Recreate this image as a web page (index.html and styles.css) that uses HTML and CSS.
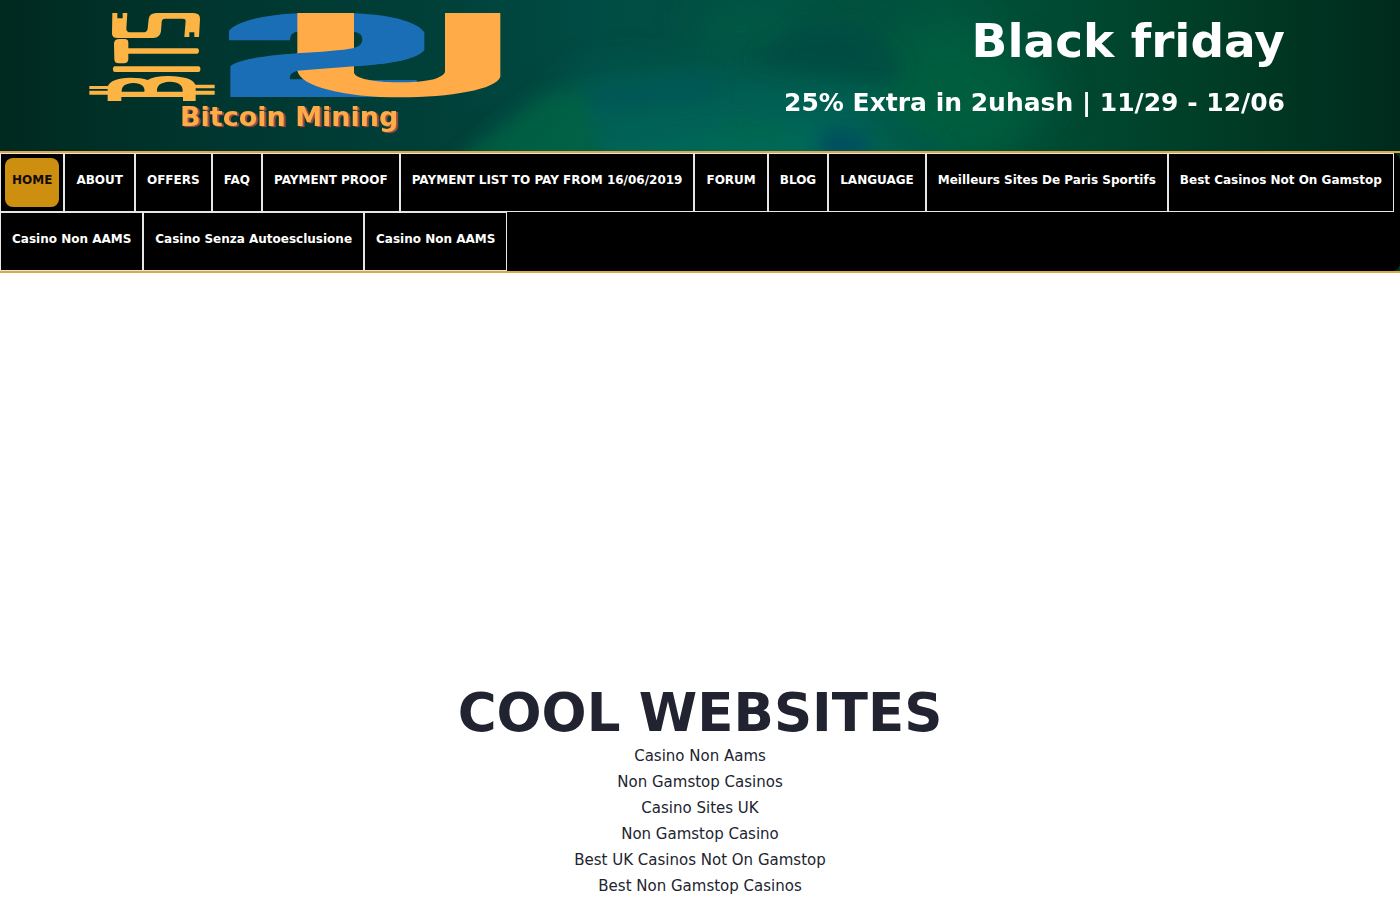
FILE: index.html
```html
<!DOCTYPE html>
<html lang="en">
<head>
<meta charset="utf-8">
<meta name="viewport" content="width=device-width, initial-scale=1">
<title>Bits2U Bitcoin Mining</title>
<link rel="stylesheet" href="styles.css">
</head>
<body>
<header class="banner">
  <svg class="aurora" viewBox="0 0 1400 151" preserveAspectRatio="none" aria-hidden="true">
    <defs>
      <filter id="soft" x="-50%" y="-50%" width="200%" height="200%"><feGaussianBlur stdDeviation="20"/></filter>
      <filter id="fine" x="-50%" y="-50%" width="200%" height="200%"><feGaussianBlur stdDeviation="9"/></filter>
    </defs>
    <g filter="url(#soft)">
      <path d="M480 170L600 75L860 80L960 170Z" fill="#00655a" opacity=".8"/>
      <path d="M860 50L960 20L1060 90L1000 160H900Z" fill="#00633f" opacity=".7"/>
      <path d="M700 10H780L830 40L700 50Z" fill="#006044" opacity=".6"/>
    </g>
    <g filter="url(#fine)">
      <path d="M450 165L545 95L582 88L600 165Z" fill="#006340" opacity=".75"/>
      <path d="M590 88L710 75L720 98L600 112Z" fill="#005258" opacity=".6"/>
      <path d="M800 25H865L905 65L890 85L750 62Z" fill="#004842" opacity=".7"/>
      <path d="M605 145L820 128L870 160H600Z" fill="#00705c" opacity=".6"/>
      <ellipse cx="842" cy="145" rx="28" ry="15" fill="#00505e"/>
      <path d="M880 110L955 155H920L870 120Z" fill="#00524a" opacity=".7"/>
      <ellipse cx="755" cy="131" rx="42" ry="10" fill="#006747" opacity=".6"/>
    </g>
  </svg>
  <a class="logo" href="#" aria-label="Bits2U Bitcoin Mining">
    <svg class="logo-art" width="412" height="122" viewBox="89 12 412 122">
      <g transform="translate(80 0) scale(.33333)" fill="#fcb544">
        <path d="M97 39H112V55H128V39H142L139 86Q139 97 152 97H188Q202 97 203 86L206 57Q208 39 230 39H340Q361 39 360 58L357 111H343V97H328V111H313L317 63Q317 56 308 56H255Q246 56 245 66L243 94Q240 114 220 114H112Q95 114 96 99Z"/>
        <path d="M118 117H134Q145 117 145 128V145H352Q357 146 357 153T352 161H145V178Q144 190 132 190H116Q103 190 103 178L102 130Q103 117 118 117Z"/>
        <rect x="99" y="199" width="262" height="17" rx="6"/>
        <path fill-rule="evenodd" d="M28 258H84Q92 235 150 233Q185 233 203 240Q222 228 265 228Q336 229 346 254H404V265H347V272H404V284H347V303H309V291H124V303H83V284H28V272H83V267H28ZM125 275H193Q197 251 160 249Q124 250 125 275ZM231 275H308Q310 246 269 245Q228 247 231 275Z"/>
      </g>
      <g transform="translate(220 0) scale(.33333)">
        <path fill="#1a6eb5" d="M27 121V93C50 62 145 43 240 40H402C500 43 590 63 613 97V150C590 180 500 193 402 199L232 212C215 217 208 225 210 238H590V291H31V199C60 176 150 166 232 160L402 144C418 141 427 132 427 118C427 105 419 98 402 95H232C216 97 211 105 210 121Z"/>
        <path fill="#004039" d="M402 199C500 193 590 180 613 150V215L600 240H402Z"/>
        <path fill="#1a6eb5" d="M402 144V199C500 193 590 180 613 150L560 130H425Q418 141 402 144Z"/>
        <path fill="#ffab48" d="M232 39H402V218C408 239 480 247 540 247C610 247 665 239 675 216V39H841V230C830 268 690 292 540 292C370 292 240 258 232 212Z"/>
        <path fill="#1a6eb5" d="M230 160C300 156 370 151 403 144V199L230 212Z"/>
      </g>
      <text class="logo-text" x="180" y="126">Bitcoin Mining</text>
    </svg>
  </a>
  <div class="promo">
    <h1 class="promo-title">Black friday</h1>
    <p class="promo-text">25% Extra in 2uhash | 11/29 - 12/06</p>
  </div>
</header>
<nav class="nav" aria-label="Main">
  <ul class="menu">
    <li class="item"><a class="link active" href="#">HOME</a></li>
    <li class="item"><a class="link" href="#">ABOUT</a></li>
    <li class="item"><a class="link" href="#">OFFERS</a></li>
    <li class="item"><a class="link" href="#">FAQ</a></li>
    <li class="item"><a class="link" href="#">PAYMENT PROOF</a></li>
    <li class="item"><a class="link" href="#">PAYMENT LIST TO PAY FROM 16/06/2019</a></li>
    <li class="item"><a class="link" href="#">FORUM</a></li>
    <li class="item"><a class="link" href="#">BLOG</a></li>
    <li class="item"><a class="link" href="#">LANGUAGE</a></li>
    <li class="item"><a class="link" href="#">Meilleurs Sites De Paris Sportifs</a></li>
    <li class="item"><a class="link" href="#">Best Casinos Not On Gamstop</a></li>
    <li class="item"><a class="link" href="#">Casino Non AAMS</a></li>
    <li class="item"><a class="link" href="#">Casino Senza Autoesclusione</a></li>
    <li class="item"><a class="link" href="#">Casino Non AAMS</a></li>
  </ul>
</nav>
<main class="content">
  <h2 class="heading">COOL WEBSITES</h2>
  <ul class="sites">
    <li><a class="site" href="#">Casino Non Aams</a></li>
    <li><a class="site" href="#">Non Gamstop Casinos</a></li>
    <li><a class="site" href="#">Casino Sites UK</a></li>
    <li><a class="site" href="#">Non Gamstop Casino</a></li>
    <li><a class="site" href="#">Best UK Casinos Not On Gamstop</a></li>
    <li><a class="site" href="#">Best Non Gamstop Casinos</a></li>
  </ul>
</main>
</body>
</html>
```
FILE: styles.css
```css
* { box-sizing: border-box; }
body {
  margin: 0;
  background: #fff;
  color: #212430;
  font-family: "DejaVu Sans", sans-serif;
}
h1, h2, p, ul { margin: 0; padding: 0; }
ul { list-style: none; }
a { color: inherit; text-decoration: none; }

.banner {
  position: relative;
  display: flex;
  justify-content: space-between;
  align-items: flex-start;
  padding: 12px 115px 17px 89px;
  background: linear-gradient(90deg, #00291f 0%, #00362f 15%, #004039 31%, #004c44 42%, #005244 55%, #00533c 68%, #004029 84%, #002b1c 100%);
}
.aurora { position: absolute; inset: 0; width: 100%; height: 100%; }
.logo, .promo { position: relative; }
.logo, .logo-art { display: block; }
.logo-text {
  font-size: 27px;
  font-weight: bold;
  fill: #ffab48;
  text-shadow: 2px 1px 1px #a64f43;
}
.promo { color: #fff; text-align: right; }
.promo-title { font-size: 47px; line-height: 58px; }
.promo-text { margin-top: 17px; font-size: 25px; font-weight: bold; line-height: 32px; }

.nav {
  border-top: 2px solid #e0a548;
  border-bottom: 2px solid #e0a548;
  background: #00301f;
}
.menu {
  display: flex;
  flex-wrap: wrap;
  border-radius: 0 8px 8px 0;
  background: #000;
}
.item { padding: 4px; border: 1px solid #e6e6e6; }
.link {
  display: block;
  padding: 15px 7px 20px;
  border-radius: 8px;
  color: #fff;
  font-size: 12px;
  font-weight: bold;
  line-height: 14px;
}
.active { background: #cc8f10; color: #140c05; }

.content { padding-top: 409px; text-align: center; }
.heading { font-size: 53px; line-height: 61px; }
.sites { font-size: 15px; line-height: 26px; }
```
